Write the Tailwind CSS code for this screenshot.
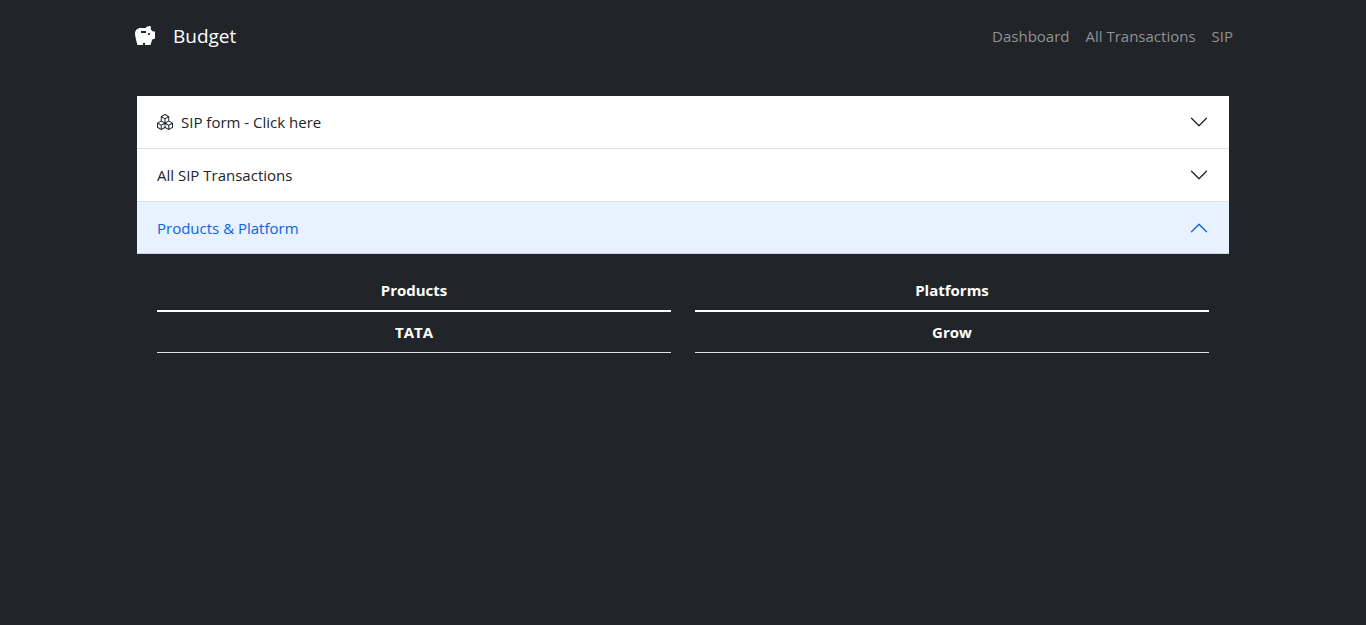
<!DOCTYPE html>
<html lang="en">
<head>
<meta charset="utf-8">
<meta name="viewport" content="width=device-width, initial-scale=1">
<title>Budget</title>
<script src="https://cdn.jsdelivr.net/npm/@tailwindcss/browser@4"></script>
</head>
<body class="min-h-screen bg-[#212529] font-['Open_Sans','Noto_Sans',sans-serif] text-[15px] leading-6 text-white">
<header class="mx-auto flex h-[72px] max-w-[1116px] items-center justify-between px-2">
  <a href="#" class="flex items-center gap-4 text-[19px] leading-[30px]">
    <svg class="size-6" viewBox="0 0 24 24" fill="currentColor" fill-rule="evenodd" aria-hidden="true"><path d="M19.83 7.5l-2.27-2.27c.07-.42.18-.81.32-1.15.08-.18.12-.37.12-.58 0-.83-.67-1.5-1.5-1.5-1.64 0-3.09.79-4 2h-5C4.46 4 2 6.46 2 9.5S4.5 21 4.5 21H10v-2h2v2h5.5l1.68-5.59L22 14.47V7.5h-2.17zM13 9H8V7h5v2zm3 2c-.55 0-1-.45-1-1s.45-1 1-1 1 .45 1 1-.45 1-1 1z"/></svg>
    <span>Budget</span>
  </a>
  <nav class="flex gap-4 text-[#909294]">
    <a href="#">Dashboard</a>
    <a href="#">All Transactions</a>
    <a href="#">SIP</a>
  </nav>
</header>
<main class="mx-auto max-w-[1092px] pt-6">
  <div class="bg-white text-[#212529]">
    <h2 class="border-b border-[#dee2e6]">
      <button type="button" aria-expanded="false" class="flex h-[52px] w-full items-center px-5 text-left">
        <svg class="mr-2 size-4" viewBox="0 0 16 16" fill="currentColor" aria-hidden="true"><path d="M7.752.066a.5.5 0 0 1 .496 0l3.75 2.143a.5.5 0 0 1 .252.434v3.995l3.498 2A.5.5 0 0 1 16 9.07v4.286a.5.5 0 0 1-.252.434l-3.75 2.143a.5.5 0 0 1-.496 0l-3.502-2-3.502 2.001a.5.5 0 0 1-.496 0l-3.75-2.143A.5.5 0 0 1 0 13.357V9.071a.5.5 0 0 1 .252-.434L3.75 6.638V2.643a.5.5 0 0 1 .252-.434zM4.25 7.504 1.508 9.071l2.742 1.567 2.742-1.567zM7.5 9.933l-2.75 1.571v3.134l2.75-1.571zm1 3.134 2.75 1.571v-3.134L8.5 9.933zm.508-3.996 2.742 1.567 2.742-1.567-2.742-1.567zm2.242-2.433V3.504L8.5 5.076V8.21zM7.5 8.21V5.076L4.75 3.504v3.134zM5.258 2.643 8 4.21l2.742-1.567L8 1.076zM15 9.933l-2.75 1.571v3.134L15 13.067zM3.75 14.638v-3.134L1 9.933v3.134z"/></svg>
        <span>SIP form - Click here</span>
        <svg class="ml-auto size-5" viewBox="0 0 16 16" fill="currentColor" aria-hidden="true"><path d="M1.646 4.646a.5.5 0 0 1 .708 0L8 10.293l5.646-5.647a.5.5 0 0 1 .708.708l-6 6a.5.5 0 0 1-.708 0l-6-6a.5.5 0 0 1 0-.708z"/></svg>
      </button>
    </h2>
    <h2 class="border-b border-[#dee2e6]">
      <button type="button" aria-expanded="false" class="flex h-[52px] w-full items-center px-5 text-left">
        <span>All SIP Transactions</span>
        <svg class="ml-auto size-5" viewBox="0 0 16 16" fill="currentColor" aria-hidden="true"><path d="M1.646 4.646a.5.5 0 0 1 .708 0L8 10.293l5.646-5.647a.5.5 0 0 1 .708.708l-6 6a.5.5 0 0 1-.708 0l-6-6a.5.5 0 0 1 0-.708z"/></svg>
      </button>
    </h2>
    <h2>
      <button type="button" aria-expanded="true" aria-controls="lists" class="flex h-[52px] w-full items-center bg-[#e7f1ff] px-5 text-left text-[#0c63e4] shadow-[inset_0_-1px_0_#c9d3e0]">
        <span>Products &amp; Platform</span>
        <svg class="ml-auto size-5 rotate-180" viewBox="0 0 16 16" fill="currentColor" aria-hidden="true"><path d="M1.646 4.646a.5.5 0 0 1 .708 0L8 10.293l5.646-5.647a.5.5 0 0 1 .708.708l-6 6a.5.5 0 0 1-.708 0l-6-6a.5.5 0 0 1 0-.708z"/></svg>
      </button>
    </h2>
  </div>
  <div id="lists" class="grid grid-cols-2 gap-6 px-5 py-4">
    <table class="w-full border-separate border-spacing-0 self-start text-center font-bold">
      <thead><tr><th scope="col" class="border-b-2 border-white px-2 pt-2 pb-2">Products</th></tr></thead>
      <tbody><tr><th scope="row" class="border-b border-[#dee2e6] p-2">TATA</th></tr></tbody>
    </table>
    <table class="w-full border-separate border-spacing-0 self-start text-center font-bold">
      <thead><tr><th scope="col" class="border-b-2 border-white px-2 pt-2 pb-2">Platforms</th></tr></thead>
      <tbody><tr><th scope="row" class="border-b border-[#dee2e6] p-2">Grow</th></tr></tbody>
    </table>
  </div>
</main>
</body>
</html>
